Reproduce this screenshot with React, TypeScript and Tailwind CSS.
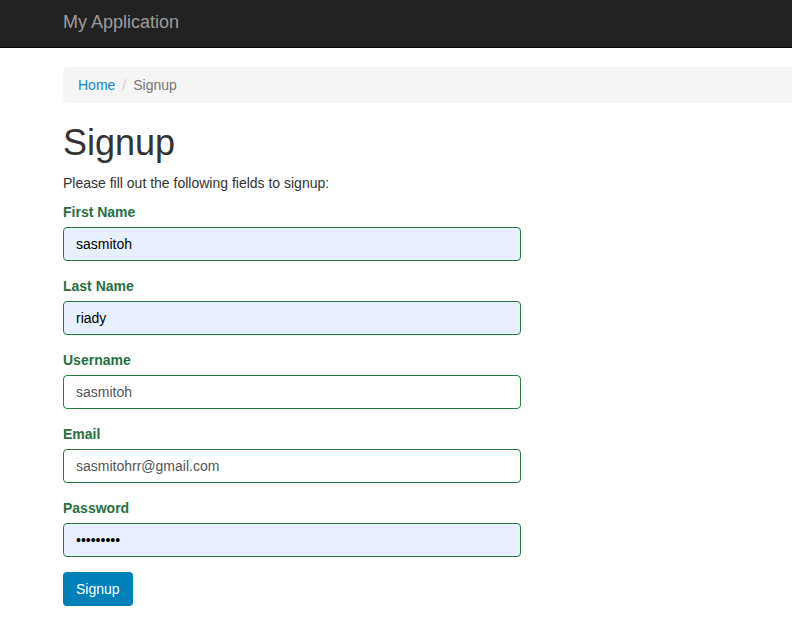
const fields = [
  { label: "First Name", value: "sasmitoh", type: "text", autofill: true },
  { label: "Last Name", value: "riady", type: "text", autofill: true },
  { label: "Username", value: "sasmitoh", type: "text", autofill: false },
  { label: "Email", value: "sasmitohrr@gmail.com", type: "text", autofill: false },
  { label: "Password", value: "123456789", type: "password", autofill: true },
]

export default function App() {
  return (
    <div className="min-h-[638px] bg-white font-['Liberation_Sans',Arial,sans-serif] text-[14px] leading-[20px] text-[#333] overflow-hidden">
      <nav className="h-[48px] bg-[#222] border-b border-[#080808]">
        <div className="pl-[63px] pb-[4px] h-[47px] flex items-center">
          <span className="text-[18px] text-[#9d9d9d]">My Application</span>
        </div>
      </nav>

      <div className="pl-[63px] pt-[19px]">
        <ol className="flex items-center bg-[#f5f5f5] rounded-l px-[15px] py-[8px] w-[800px]">
          <li>
            <a className="text-[#1188c8]" href="#">Home</a>
          </li>
          <li className="px-[7px] text-[#ccc]">/</li>
          <li className="text-[#777]">Signup</li>
        </ol>

        <h1 className="mt-[20px] mb-[10px] text-[36px] leading-[40px] text-[#333]">Signup</h1>
        <p className="mb-[9px]">Please fill out the following fields to signup:</p>

        <form className="w-[458px]" onSubmit={(e) => e.preventDefault()}>
          {fields.map((f) => (
            <div key={f.label} className="mb-[15px]">
              <label className="block mb-[5px] font-bold text-[#26703f]">{f.label}</label>
              <input
                type={f.type}
                defaultValue={f.value}
                className={`block w-full h-[34px] px-[12px] py-[6px] text-[14px] border border-[#267a45] rounded-[4px] outline-none ${
                  f.autofill ? "bg-[#e8f0fe] text-black" : "bg-white text-[#555]"
                }`}
              />
            </div>
          ))}
          <button
            type="submit"
            className="h-[34px] px-[13px] rounded-[4px] bg-[#0080b8] text-white text-[14px]"
          >
            Signup
          </button>
        </form>
      </div>
    </div>
  )
}
